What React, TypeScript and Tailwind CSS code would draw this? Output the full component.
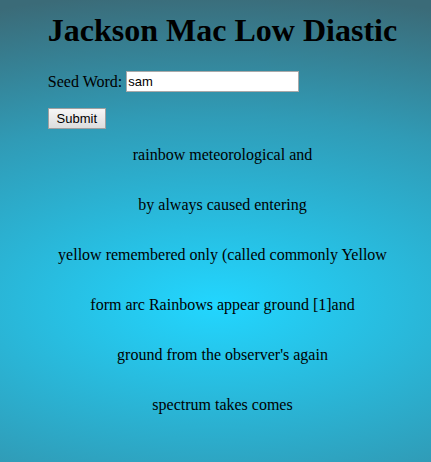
import { useState } from "react";

const LINES = [
  "rainbow meteorological and",
  "by always caused entering",
  "yellow remembered only (called commonly Yellow",
  "form arc Rainbows appear ground [1]and",
  "ground from the observer's again",
  "spectrum takes comes",
];

export default function App() {
  const [seed, setSeed] = useState("sam");

  return (
    <div className="flex min-h-screen justify-center bg-[radial-gradient(ellipse_400px_190px_at_50%_66%,#22d6ff_0%,#309bb6_100%,#3b6b78_165%)] pl-[14px] font-['Liberation_Serif',serif] text-base text-black">
      <main className="pt-3 pb-10">
        <h1 className="text-[32px] leading-9 font-bold">Jackson Mac Low Diastic</h1>
        <form onSubmit={(event) => event.preventDefault()} className="mt-[22px]">
          <div className="flex h-[23px] items-center gap-1">
            <label htmlFor="seed">Seed Word:</label>
            <input
              id="seed"
              type="text"
              value={seed}
              onChange={(event) => setSeed(event.target.value)}
              className="h-[21px] w-[173px] border border-[#a9a9a9] bg-white px-px font-['Liberation_Sans',sans-serif] text-[13px]"
            />
          </div>
          <button
            type="submit"
            className="mt-[15px] block h-[21px] w-[58px] border border-[#a0a0a0] bg-linear-to-b from-[#f6f6f6] to-[#dddddd] font-['Liberation_Sans',sans-serif] text-[13px] leading-none"
          >
            Submit
          </button>
        </form>
        <div className="mt-[17px] flex flex-col gap-8 text-center leading-[18px]">
          {LINES.map((line) => (
            <p key={line}>{line}</p>
          ))}
        </div>
      </main>
    </div>
  );
}
